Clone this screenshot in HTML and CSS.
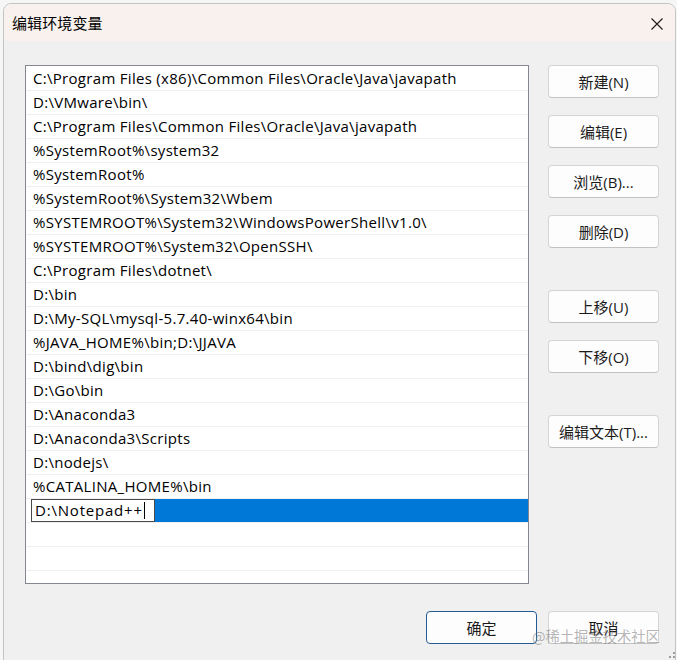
FILE: index.html
```html
<!DOCTYPE html>
<html lang="zh-CN">
<head>
<meta charset="utf-8">
<title>编辑环境变量</title>
<link rel="stylesheet" href="styles.css">
</head>
<body>
<div class="screen">
  <div class="dialog">
    <div class="titlebar">
      <span class="title">编辑环境变量</span>
      <svg class="close" width="12" height="12" viewBox="0 0 12 12"><path d="M0.5 0.5 L11.5 11.5 M11.5 0.5 L0.5 11.5" stroke="#1a1a1a" stroke-width="1.1" fill="none"/></svg>
    </div>
    <div class="body">
      <div class="main">
        <div class="list">
          <div class="row">C:\Program Files (x86)\Common Files\Oracle\Java\javapath</div>
          <div class="row">D:\VMware\bin\</div>
          <div class="row">C:\Program Files\Common Files\Oracle\Java\javapath</div>
          <div class="row">%SystemRoot%\system32</div>
          <div class="row">%SystemRoot%</div>
          <div class="row">%SystemRoot%\System32\Wbem</div>
          <div class="row">%SYSTEMROOT%\System32\WindowsPowerShell\v1.0\</div>
          <div class="row">%SYSTEMROOT%\System32\OpenSSH\</div>
          <div class="row">C:\Program Files\dotnet\</div>
          <div class="row">D:\bin</div>
          <div class="row">D:\My-SQL\mysql-5.7.40-winx64\bin</div>
          <div class="row">%JAVA_HOME%\bin;D:\JJAVA</div>
          <div class="row">D:\bind\dig\bin</div>
          <div class="row">D:\Go\bin</div>
          <div class="row">D:\Anaconda3</div>
          <div class="row">D:\Anaconda3\Scripts</div>
          <div class="row">D:\nodejs\</div>
          <div class="row">%CATALINA_HOME%\bin</div>
          <div class="row row-edit"><span class="edit">D:\Notepad++<span class="caret"></span></span><span class="sel"></span></div>
          <div class="row"></div>
          <div class="row"></div>
          <div class="row"></div>
        </div>
        <div class="side">
          <button class="btn">新建(N)</button>
          <button class="btn gap">编辑(E)</button>
          <button class="btn gap">浏览(B)...</button>
          <button class="btn gap">删除(D)</button>
          <button class="btn gap-lg">上移(U)</button>
          <button class="btn gap">下移(O)</button>
          <button class="btn gap-lg">编辑文本(T)...</button>
        </div>
      </div>
      <div class="footer">
        <button class="btn btn-default">确定</button>
        <button class="btn">取消</button>
      </div>
    </div>
    <div class="watermark">@稀土掘金技术社区</div>
    <div class="grip"><i></i><i></i><i></i></div>
  </div>
</div>
</body>
</html>
```

FILE: styles.css
```css
* { box-sizing: border-box; }
html, body { margin: 0; padding: 0; }
body {
  width: 677px;
  height: 660px;
  overflow: hidden;
  background: #f6f6f6;
  font-family: "Open Sans", "Noto Sans CJK SC", sans-serif;
  color: #000;
}
.screen {
  width: 677px;
  height: 660px;
  padding: 3px 0 0 3px;
}
.dialog {
  position: relative;
  width: 673px;
  height: 664px;
  background: #f0f0f0;
  border: 1px solid #c4c4c4;
  border-radius: 8px 8px 0 0;
  overflow: hidden;
}
.titlebar {
  height: 37px;
  background: #f8f1ed;
  display: flex;
  align-items: center;
  justify-content: space-between;
  padding: 0 12px 0 8px;
}
.title {
  font-family: "Noto Sans CJK SC", sans-serif;
  font-size: 15px;
  letter-spacing: 0.1px;
  margin-top: -1px;
}
.close { margin-top: 2px; }
.body {
  padding: 24px 0 0 21px;
}
.main {
  display: flex;
  align-items: flex-start;
}
.list {
  width: 504px;
  height: 519px;
  background: #fff;
  border: 1px solid #828790;
  padding-top: 1px;
  overflow: hidden;
}
.row {
  height: 24px;
  border-bottom: 1px solid #f0f0f0;
  font-size: 15px;
  letter-spacing: 0.3px;
  line-height: 23px;
  padding-left: 7px;
  white-space: nowrap;
}
.row-edit {
  display: flex;
  padding-left: 5px;
}
.edit {
  display: block;
  width: 124px;
  height: 23px;
  border: 1px solid #4a4a4a;
  background: #fff;
  padding-left: 3px;
  line-height: 21px;
  position: relative;
  letter-spacing: 0.8px;
}
.caret {
  display: inline-block;
  width: 1px;
  height: 17px;
  background: #000;
  vertical-align: -3px;
  margin-left: 1px;
}
.sel {
  flex: 1;
  height: 23px;
  background: #0078d7;
}
.side {
  display: flex;
  flex-direction: column;
  margin-left: 19px;
}
.btn {
  width: 111px;
  height: 33px;
  background: #fdfdfd;
  border: 1px solid #d4d4d4;
  border-bottom-color: #c2c2c2;
  border-radius: 4px;
  font-family: "Open Sans", "Noto Sans CJK SC", sans-serif;
  font-size: 15px;
  color: #1a1a1a;
  padding: 0;
}
.gap { margin-top: 17px; }
.gap-lg { margin-top: 42px; }
.footer {
  display: flex;
  justify-content: flex-end;
  gap: 11px;
  padding-right: 16px;
  margin-top: 27px;
}
.btn-default {
  border: 1px solid #235c94;
}
.watermark {
  position: absolute;
  left: 528px;
  top: 621px;
  font-family: "Noto Sans CJK SC", sans-serif;
  font-size: 14.3px;
  color: rgba(120, 120, 120, 0.55);
  white-space: nowrap;
}
.grip {
  position: absolute;
  left: 664px;
  top: 648px;
  width: 8px;
  height: 8px;
}
.grip i {
  position: absolute;
  width: 2px;
  height: 2px;
  background: #9c9c9c;
}
.grip i:nth-child(1) { left: 5px; top: 0; }
.grip i:nth-child(2) { left: 1px; top: 4px; }
.grip i:nth-child(3) { left: 5px; top: 4px; }
```
